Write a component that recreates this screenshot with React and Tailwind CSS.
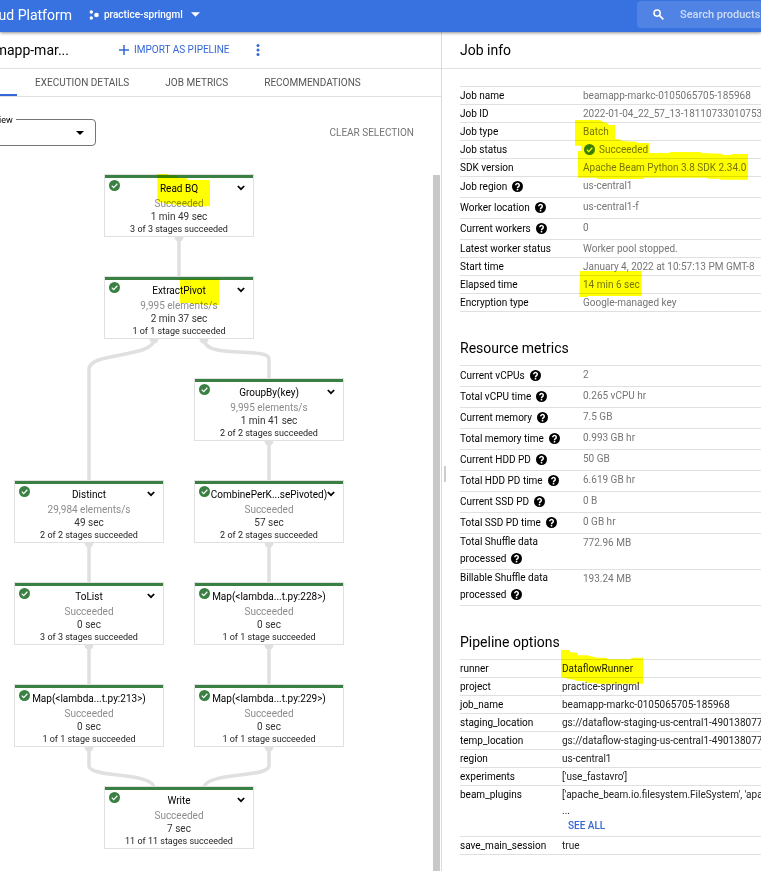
const JOB_INFO = [
  { label: "Job name", value: "beamapp-markc-0105065705-185968" },
  { label: "Job ID", value: "2022-01-04_22_57_13-18110733010753932" },
  { label: "Job type", value: "Batch" },
  { label: "Job status", value: "Succeeded", status: true },
  { label: "SDK version", value: "Apache Beam Python 3.8 SDK 2.34.0" },
  { label: "Job region", value: "us-central1", help: true },
  { label: "Worker location", value: "us-central1-f", help: true },
  { label: "Current workers", value: "0", help: true },
  { label: "Latest worker status", value: "Worker pool stopped." },
  { label: "Start time", value: "January 4, 2022 at 10:57:13 PM GMT-8" },
  { label: "Elapsed time", value: "14 min 6 sec" },
  { label: "Encryption type", value: "Google-managed key" },
];

const METRICS = [
  { label: "Current vCPUs", value: "2", help: true },
  { label: "Total vCPU time", value: "0.265 vCPU hr", help: true },
  { label: "Current memory", value: "7.5 GB", help: true },
  { label: "Total memory time", value: "0.993 GB hr", help: true },
  { label: "Current HDD PD", value: "50 GB", help: true },
  { label: "Total HDD PD time", value: "6.619 GB hr", help: true },
  { label: "Current SSD PD", value: "0 B", help: true },
  { label: "Total SSD PD time", value: "0 GB hr", help: true },
  { label: "Total Shuffle data", second: "processed", value: "772.96 MB", help: true },
  { label: "Billable Shuffle data", second: "processed", value: "193.24 MB", help: true },
];

const OPTIONS = [
  { label: "runner", value: "DataflowRunner" },
  { label: "project", value: "practice-springml" },
  { label: "job_name", value: "beamapp-markc-0105065705-185968" },
  { label: "staging_location", value: "gs://dataflow-staging-us-central1-490138077f" },
  { label: "temp_location", value: "gs://dataflow-staging-us-central1-490138077f" },
  { label: "region", value: "us-central1" },
  { label: "experiments", value: "['use_fastavro']" },
  { label: "beam_plugins", value: "['apache_beam.io.filesystem.FileSystem', 'apache_beam", more: true },
  { label: "save_main_session", value: "true" },
];

const NODES = [
  { pos: "left-[104px] top-0", name: "Read BQ", rate: "Succeeded", time: "1 min 49 sec", stages: "3 of 3 stages succeeded", open: true },
  { pos: "left-[104px] top-[102px]", name: "ExtractPivot", rate: "9,995 elements/s", time: "2 min 37 sec", stages: "1 of 1 stage succeeded", open: true },
  { pos: "left-[194px] top-[204px]", name: "GroupBy(key)", rate: "9,995 elements/s", time: "1 min 41 sec", stages: "2 of 2 stages succeeded", open: true },
  { pos: "left-[14px] top-[306px]", name: "Distinct", rate: "29,984 elements/s", time: "49 sec", stages: "2 of 2 stages succeeded", open: true },
  { pos: "left-[194px] top-[306px]", name: "CombinePerK...sePivoted)", rate: "Succeeded", time: "57 sec", stages: "2 of 2 stages succeeded", open: true },
  { pos: "left-[14px] top-[408px]", name: "ToList", rate: "Succeeded", time: "0 sec", stages: "3 of 3 stages succeeded", open: true },
  { pos: "left-[194px] top-[408px]", name: "Map(<lambda...t.py:228>)", rate: "Succeeded", time: "0 sec", stages: "1 of 1 stage succeeded" },
  { pos: "left-[14px] top-[510px]", name: "Map(<lambda...t.py:213>)", rate: "Succeeded", time: "0 sec", stages: "1 of 1 stage succeeded" },
  { pos: "left-[194px] top-[510px]", name: "Map(<lambda...t.py:229>)", rate: "Succeeded", time: "0 sec", stages: "1 of 1 stage succeeded" },
  { pos: "left-[104px] top-[612px]", name: "Write", rate: "Succeeded", time: "7 sec", stages: "11 of 11 stages succeeded", open: true },
];

const PORTS = [
  [179, 63], [154, 165], [204, 165], [269, 267], [89, 369],
  [269, 369], [89, 471], [269, 471], [89, 573], [269, 573],
];

function CheckIcon({ className }) {
  return (
    <svg viewBox="0 0 12 12" className={className} aria-hidden="true">
      <circle cx="6" cy="6" r="6" fill="#3a8043" />
      <path d="M3 6.2 5.1 8.3 9.1 4.1" fill="none" stroke="#fff" strokeWidth="1.3" />
    </svg>
  );
}

function HelpIcon() {
  return (
    <svg viewBox="2 2 20 20" className="h-[11px] w-[11px] shrink-0" aria-hidden="true">
      <circle cx="12" cy="12" r="10" fill="#000" />
      <path
        d="M8.8 9.8a3.2 3.2 0 1 1 5.3 2.3c-1.3 1-2.1 1.4-2.1 3.1"
        fill="none"
        stroke="#fff"
        strokeWidth="2.8"
      />
      <rect x="10.6" y="16.4" width="2.8" height="2.8" fill="#fff" />
    </svg>
  );
}

function Node({ node }) {
  return (
    <article className={`absolute h-[63px] w-[150px] border border-[#e0e0e0] bg-white text-center text-[10px] ${node.pos}`}>
      <div className="h-[3px] bg-[#3a8043]" />
      <CheckIcon className="absolute left-1 top-[5px] h-[11px] w-[11px]" />
      <h3 className="mt-[5px] whitespace-nowrap leading-3 text-black">{node.name}</h3>
      {node.open && (
        <button aria-label={`Expand ${node.name}`} className="absolute right-2 top-[9px] flex h-2 w-2 items-center justify-center">
          <svg viewBox="0 0 8 6" className="h-[6px] w-2 shrink-0" aria-hidden="true">
            <path d="M.8 1 4 4.2 7.2 1" fill="none" stroke="#000" strokeWidth="1.7" />
          </svg>
        </button>
      )}
      <p className="mt-[3px] leading-3 text-[#8c8c8c]">{node.rate}</p>
      <p className="mt-px leading-3 text-[#333]">{node.time}</p>
      <p className="text-[9px] leading-3 text-[#222]">{node.stages}</p>
    </article>
  );
}

function Graph() {
  return (
    <div className="relative h-[697px] flex-1 overflow-hidden">
      <svg className="absolute left-0 top-0" width="360" height="697" viewBox="0 0 360 697" aria-hidden="true">
        <g fill="none" stroke="#e0e0e0" strokeWidth="3.5">
          <path d="M179 63V102" />
          <path d="M154 165C154 184 89 178 89 195V306" />
          <path d="M204 165C204 186 269 172 269 185V204" />
          <path d="M269 267V306M89 369V408M269 369V408M89 471V510M269 471V510" />
          <path d="M89 573V592C89 604 154 598 154 614" />
          <path d="M269 573V592C269 604 204 598 204 614" />
        </g>
        {PORTS.map(([x, y]) => (
          <circle key={`${x}-${y}`} cx={x} cy={y} r="4.5" fill="#e0e0e0" />
        ))}
      </svg>
      {NODES.map((node) => (
        <Node key={node.pos} node={node} />
      ))}
      <svg className="pointer-events-none absolute left-[90px] top-0 mix-blend-multiply" width="180" height="190" viewBox="0 27 540 570" aria-hidden="true">
        <g fill="#ffff00">
          <polygon points="202,27 235,27 235,31 262,31 262,38 289,38 293,45 360,45 360,124 293,124 290,121 255,121 252,117 225,117 222,113 202,110" />
          <polygon points="270,342 387,342 387,420 337,420 337,417 303,417 303,414 270,414" />
        </g>
      </svg>
    </div>
  );
}

function DataTable({ rows, columns, labelledBy, valueColor }) {
  return (
    <table aria-labelledby={labelledBy} className="w-full table-fixed border-separate border-spacing-0 border-t border-[#e0e0e0] text-left text-[10px] leading-[17px]">
      <colgroup>
        <col className={columns} />
        <col />
      </colgroup>
      <tbody>
        {rows.map((row) => (
          <tr key={row.label} className="align-top">
            <th scope="row" className="border-b border-[#e0e0e0] p-0 font-normal text-black">
              {row.second && <span className="block leading-4">{row.label}</span>}
              <span className={`flex items-center gap-[5px] whitespace-nowrap ${row.second ? "mb-[2px] h-[17px]" : row.help ? "mb-px h-[19px]" : "h-[17px]"}`}>
                {row.second || row.label}
                {row.help && <HelpIcon />}
              </span>
            </th>
            <td className={`whitespace-nowrap border-b border-[#e0e0e0] p-0 ${valueColor}`}>
              {row.status ? (
                <span className="flex items-center gap-1 pl-px">
                  <CheckIcon className="h-[11px] w-[11px]" />
                  {row.value}
                </span>
              ) : (
                row.value
              )}
              {row.more && (
                <>
                  <span className="block leading-4">...</span>
                  <button className="mb-[3px] ml-[6px] block font-medium leading-[14px] text-[#3367d6]">SEE ALL</button>
                </>
              )}
            </td>
          </tr>
        ))}
      </tbody>
    </table>
  );
}

function Header() {
  return (
    <header className="relative z-10 flex h-8 items-center bg-[#3871e0] text-white shadow-[0_1px_3px_rgba(0,0,0,0.45)]">
      <div className="mb-[3px] flex w-[72px] shrink-0 justify-end overflow-hidden whitespace-nowrap text-[14px] leading-5">
        Google Cloud Platform
      </div>
      <button className="mb-[3px] ml-[17px] flex items-center text-[10px] font-medium leading-4">
        <svg viewBox="0 0 10 10" className="mr-[5px] h-[10px] w-[10px]" aria-hidden="true">
          <circle cx="2.3" cy="2" r="1.7" fill="#fff" />
          <circle cx="2.3" cy="8" r="1.7" fill="#fff" />
          <circle cx="7.5" cy="5" r="2.3" fill="#fff" />
        </svg>
        practice-springml
        <svg viewBox="0 0 10 5" className="ml-2 h-[5px] w-[9px]" aria-hidden="true">
          <path d="M0 0h10L5 5z" fill="#fff" />
        </svg>
      </button>
      <label className="ml-auto mb-[3px] flex h-[27px] w-[124px] items-center overflow-hidden rounded-l bg-[#5083e4] pl-4">
        <svg viewBox="0 0 11 11" className="h-[11px] w-[11px] shrink-0" aria-hidden="true">
          <circle cx="4.1" cy="4.1" r="3.1" fill="none" stroke="#fff" strokeWidth="1.5" />
          <path d="m6.5 6.5 3.8 3.8" stroke="#fff" strokeWidth="1.7" />
        </svg>
        <input
          type="search"
          aria-label="Search products and resources"
          placeholder="Search products"
          className="ml-4 w-40 shrink-0 bg-transparent text-[11px] font-medium leading-4 text-white outline-none placeholder:text-[#cfdef8]"
        />
      </label>
    </header>
  );
}

export default function App() {
  return (
    <div className="flex min-h-screen flex-col overflow-hidden bg-white font-['Roboto',sans-serif] text-black">
      <Header />
      <div className="flex flex-1">
        <main className="flex w-[442px] shrink-0 flex-col border-r border-[#dadada]">
          <div className="flex h-[37px] items-center border-b border-[#e0e0e0]">
            <h1 className="flex w-[69px] shrink-0 justify-end overflow-hidden whitespace-nowrap text-[14px] leading-5">beamapp-mar...</h1>
            <button className="ml-[50px] flex items-center gap-[5px] text-[10px] leading-4 text-[#3367d6]">
              <svg viewBox="0 0 10 10" className="h-[10px] w-[10px]" aria-hidden="true">
                <path d="M5 0v10M0 5h10" stroke="#3367d6" strokeWidth="1.5" />
              </svg>
              IMPORT AS PIPELINE
            </button>
            <button aria-label="More actions" className="ml-[26px]">
              <svg viewBox="0 0 4 12" className="h-3 w-1" aria-hidden="true">
                <circle cx="2" cy="1.6" r="1.5" fill="#3367d6" />
                <circle cx="2" cy="6" r="1.5" fill="#3367d6" />
                <circle cx="2" cy="10.4" r="1.5" fill="#3367d6" />
              </svg>
            </button>
          </div>
          <nav className="flex h-7 border-b border-[#e0e0e0] text-[10px] text-[#555]">
            <a href="#graph" className="-ml-[83px] flex w-[100px] items-center justify-center border-b-2 border-[#3367d6] text-[#3367d6]">JOB GRAPH</a>
            <a href="#execution" className="flex items-center px-[18px]">EXECUTION DETAILS</a>
            <a href="#metrics" className="flex items-center px-[18px]">JOB METRICS</a>
            <a href="#recommendations" className="flex items-center px-[18px]">RECOMMENDATIONS</a>
          </nav>
          <div className="flex h-[77px] items-start justify-between pr-[27px]">
            <div className="relative -ml-[54px] mt-[22px] h-[27px] w-[150px] rounded border border-[#757575]">
              <label htmlFor="view" className="absolute -top-2 left-[2px] bg-white pl-1 pr-[3px] text-[9px] leading-4">Job steps view</label>
              <select id="view" defaultValue="graph" className="h-full w-full appearance-none bg-transparent pl-1 text-[10px] outline-none">
                <option value="graph">Graph view</option>
              </select>
              <svg viewBox="0 0 8 4" className="pointer-events-none absolute right-[11px] top-[11px] h-1 w-2" aria-hidden="true">
                <path d="M0 0h8L4 4z" fill="#000" />
              </svg>
            </div>
            <button className="mt-7 text-[10px] leading-4 text-[#757575]">CLEAR SELECTION</button>
          </div>
          <div className="flex flex-1 pr-px">
            <Graph />
            <div className="mt-px w-[7px] bg-[#c8c8c8]" />
          </div>
        </main>

        <aside className="relative min-w-0 flex-1 overflow-hidden">
          <div className="flex h-[37px] items-center border-b border-[#e0e0e0] pl-[18px]">
            <h2 id="job-info" className="text-[14px] leading-5">Job info</h2>
          </div>
          <div className="pl-[18px] pt-[17px]">
            <DataTable rows={JOB_INFO} columns="w-[123px]" labelledBy="job-info" valueColor="text-[#757575]" />
            <h2 id="metrics" className="mb-[7px] mt-[26px] text-[14px] leading-5">Resource metrics</h2>
            <DataTable rows={METRICS} columns="w-[123px]" labelledBy="metrics" valueColor="text-[#757575]" />
            <h2 id="options" className="mb-[7px] mt-[26px] text-[14px] leading-5">Pipeline options</h2>
            <DataTable rows={OPTIONS} columns="w-[102px]" labelledBy="options" valueColor="text-[#222]" />
          </div>
          <div className="absolute left-[2px] top-[434px] h-4 w-[2px] bg-[#ccc]" />
          <svg className="pointer-events-none absolute -left-[2px] top-12 mix-blend-multiply" width="321" height="791" viewBox="0 0 963 2373" aria-hidden="true">
            <g fill="#ffff00">
              <polygon points="405,120 480,120 490,127 503,129 506,135 525,135 525,177 540,178 545,183 590,185 592,189 627,189 627,219 690,219 690,216 783,216 783,219 847,221 847,225 875,225 875,222 924,222 924,299 841,299 841,296 802,296 802,293 611,293 611,297 471,297 471,293 414,293 414,213 424,213 424,197 405,197" />
              <polygon points="420,573 605,573 605,648 443,648 443,651 418,651" />
              <polygon transform="translate(0 1620)" points="363,90 390,90 390,96 412,99 412,106 440,106 473,113 500,113 503,118 574,118 574,113 609,113 609,191 470,191 468,188 440,188 438,184 405,182 405,179 380,177 380,173 363,173" />
            </g>
          </svg>
        </aside>
      </div>
    </div>
  );
}
